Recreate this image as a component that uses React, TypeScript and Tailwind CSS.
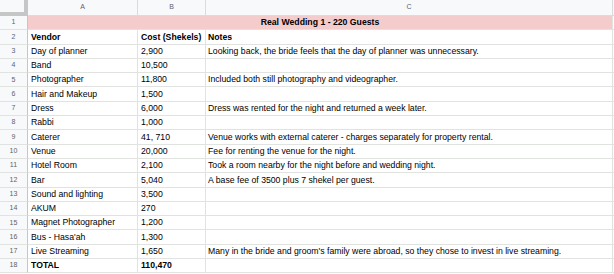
import React from "react";

const rows: [string, string, string][] = [
  ["Vendor", "Cost (Shekels)", "Notes"],
  ["Day of planner", "2,900", "Looking back, the bride feels that the day of planner was unnecessary."],
  ["Band", "10,500", ""],
  ["Photographer", "11,800", "Included both still photography and videographer."],
  ["Hair and Makeup", "1,500", ""],
  ["Dress", "6,000", "Dress was rented for the night and returned a week later."],
  ["Rabbi", "1,000", ""],
  ["Caterer", "41, 710", "Venue works with external caterer - charges separately for property rental."],
  ["Venue", "20,000", "Fee for renting the venue for the night."],
  ["Hotel Room", "2,100", "Took a room nearby for the night before and wedding night."],
  ["Bar", "5,040", "A base fee of 3500 plus 7 shekel per guest."],
  ["Sound and lighting", "3,500", ""],
  ["AKUM", "270", ""],
  ["Magnet Photographer", "1,200", ""],
  ["Bus - Hasa'ah", "1,300", ""],
  ["Live Streaming", "1,650", "Many in the bride and groom's family were abroad, so they chose to invest in live streaming."],
  ["TOTAL", "110,470", ""],
];

function RowNum({ n }: { n: number }) {
  return (
    <div className="w-[28px] shrink-0 h-full flex items-center justify-center bg-[#f8f9fa] border-r border-b border-r-[#c4c7c5] border-b-[#e1e3e1] text-[7px] text-[#5f6368]">
      {n}
    </div>
  );
}

export default function App() {
  return (
    <div
      className="w-[614px] h-[274px] overflow-hidden bg-white text-black"
      style={{ fontFamily: '"Liberation Sans", Arial, sans-serif' }}
    >
      {/* Column header */}
      <div className="flex h-[16px] bg-[#f8f9fa]">
        <div className="w-[28px] shrink-0 h-full border-r-[4px] border-b-[4px] border-[#c4c7c5] bg-[#f8f9fa]" />
        <div className="w-[110px] shrink-0 h-full flex items-center justify-center border-r border-b border-[#d9dcdf] text-[7px] text-[#5f6368]">A</div>
        <div className="w-[68px] shrink-0 h-full flex items-center justify-center border-r border-b border-[#d9dcdf] text-[7px] text-[#5f6368]">B</div>
        <div className="w-[407px] shrink-0 h-full flex items-center justify-center border-r border-b border-[#d9dcdf] text-[7px] text-[#5f6368]">C</div>
        <div className="flex-1 h-full border-b border-[#d9dcdf]" />
      </div>

      {/* Row 1 - title */}
      <div className="flex h-[14.3px]">
        <RowNum n={1} />
        <div className="w-[585px] shrink-0 h-full flex items-center justify-center bg-[#f4cccc] border-r border-b border-[#e1e3e1] text-[8.7px] font-bold leading-none">
          Real Wedding 1 - 220 Guests
        </div>
        <div className="flex-1 h-full border-b border-[#e1e3e1]" />
      </div>

      {rows.map((r, i) => {
        const bold = i === 0 || i === rows.length - 1;
        return (
          <div key={i} className="flex h-[14.3px]">
            <RowNum n={i + 2} />
            <div className={`w-[110px] shrink-0 h-full flex items-center px-[3px] border-r border-b border-[#e1e3e1] text-[8.7px] leading-none whitespace-nowrap overflow-hidden ${bold ? "font-bold" : ""}`}>
              {r[0]}
            </div>
            <div className={`w-[68px] shrink-0 h-full flex items-center px-[3px] border-r border-b border-[#e1e3e1] text-[8.7px] leading-none whitespace-nowrap overflow-hidden ${bold ? "font-bold" : ""}`}>
              {r[1]}
            </div>
            <div className={`w-[407px] shrink-0 h-full flex items-center px-[2px] border-r border-b border-[#e1e3e1] text-[8.7px] leading-none whitespace-nowrap overflow-hidden ${bold ? "font-bold" : ""}`}>
              {r[2]}
            </div>
            <div className="flex-1 h-full border-b border-[#e1e3e1]" />
          </div>
        );
      })}
    </div>
  );
}
